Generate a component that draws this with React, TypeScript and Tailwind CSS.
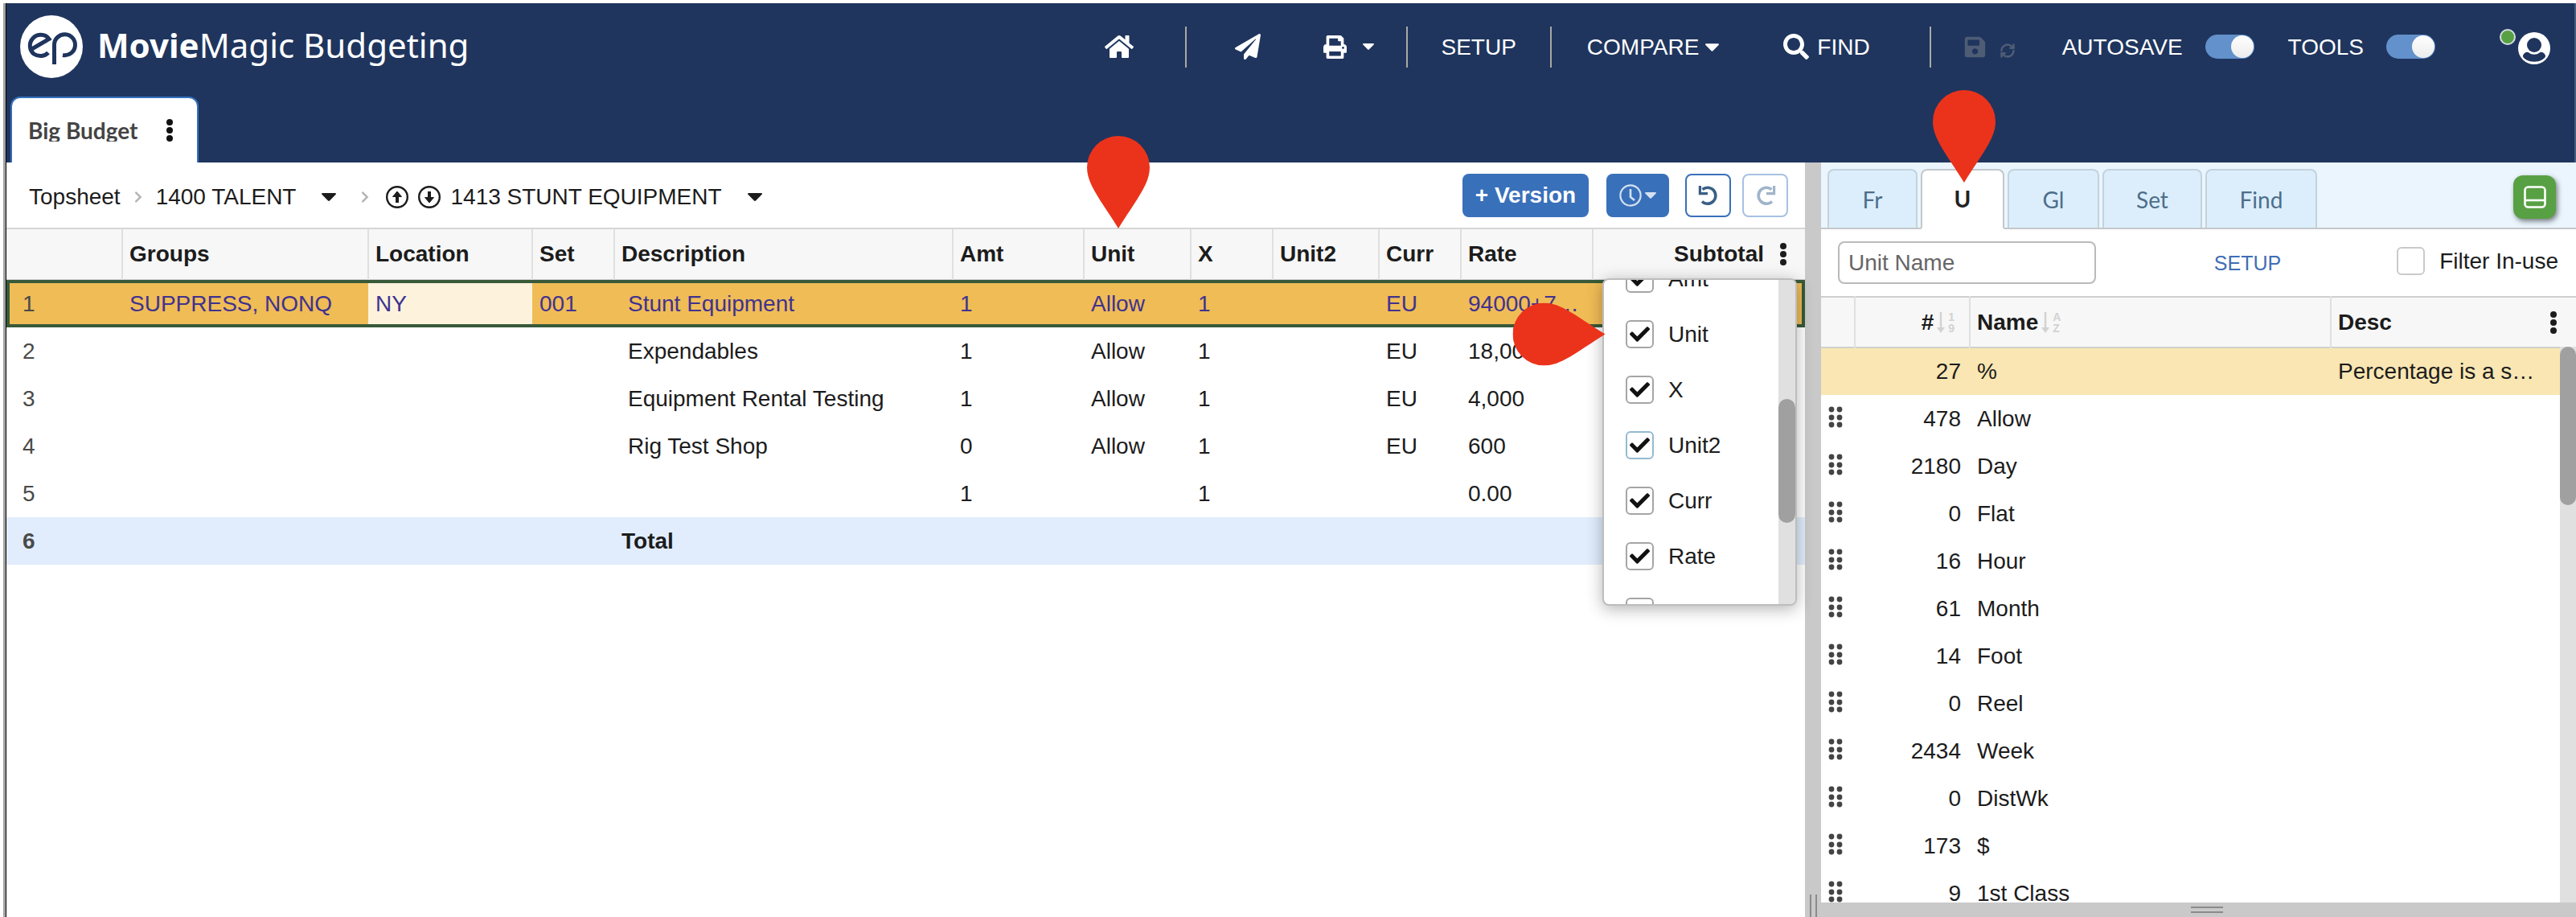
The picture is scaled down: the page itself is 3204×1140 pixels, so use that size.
import { useState } from 'react';
import type { ReactNode } from 'react';
import { FaCheck, FaChevronRight, FaHome, FaPaperPlane, FaPrint, FaSave, FaSearch } from 'react-icons/fa';
import { LuRefreshCw } from 'react-icons/lu';

const budgetRows = [
  { id: 1, groups: 'SUPPRESS, NONQ', location: 'NY', set: '001', description: 'Stunt Equipment', amt: '1', unit: 'Allow', x: '1', curr: 'EU', rate: '94000+70000' },
  { id: 2, groups: '', location: '', set: '', description: 'Expendables', amt: '1', unit: 'Allow', x: '1', curr: 'EU', rate: '18,000' },
  { id: 3, groups: '', location: '', set: '', description: 'Equipment Rental Testing', amt: '1', unit: 'Allow', x: '1', curr: 'EU', rate: '4,000' },
  { id: 4, groups: '', location: '', set: '', description: 'Rig Test Shop', amt: '0', unit: 'Allow', x: '1', curr: 'EU', rate: '600' },
  { id: 5, groups: '', location: '', set: '', description: '', amt: '1', unit: '', x: '1', curr: '', rate: '0.00' },
];

const units = [
  { count: 27, name: '%', desc: 'Percentage is a special unit' },
  { count: 478, name: 'Allow' },
  { count: 2180, name: 'Day' },
  { count: 0, name: 'Flat' },
  { count: 16, name: 'Hour' },
  { count: 61, name: 'Month' },
  { count: 14, name: 'Foot' },
  { count: 0, name: 'Reel' },
  { count: 2434, name: 'Week' },
  { count: 0, name: 'DistWk' },
  { count: 173, name: '$' },
  { count: 9, name: '1st Class' },
];

const toolTabs = [
  { name: 'Fr', width: 'w-28' },
  { name: 'U', width: 'w-[104px]' },
  { name: 'Gl', width: 'w-[114px]' },
  { name: 'Set', width: 'w-[124px]' },
  { name: 'Find', width: 'w-[139px]' },
];

const columnOptions = ['Amt', 'Unit', 'X', 'Unit2', 'Curr', 'Rate'];

function Caret({ className }: { className: string }) {
  return (
    <svg viewBox="0 0 18 10" fill="currentColor" className={className} aria-hidden="true">
      <path d="M1.2 0h15.6c1 0 1.5 1.1.8 1.8L10 9.5c-.6.6-1.4.6-2 0L.4 1.8C-.3 1.1.2 0 1.2 0z" />
    </svg>
  );
}

function Dots() {
  return (
    <svg viewBox="0 0 8 28" fill="currentColor" className="w-2 h-7" aria-hidden="true">
      <circle cx="4" cy="4" r="4" />
      <circle cx="4" cy="14" r="4" />
      <circle cx="4" cy="24" r="4" />
    </svg>
  );
}

function DragHandle() {
  return (
    <svg viewBox="0 0 18 28" fill="#444" className="w-[18px] h-7" aria-hidden="true">
      {[4, 14, 23].map((y) => (
        <g key={y}>
          <circle cx="4" cy={y} r="3.4" />
          <circle cx="14" cy={y} r="3.4" />
        </g>
      ))}
    </svg>
  );
}

function CircleArrow({ down = false }: { down?: boolean }) {
  return (
    <svg viewBox="0 0 28 28" fill="none" stroke="currentColor" className={`w-7 h-7 ${down ? 'rotate-180' : ''}`} aria-hidden="true">
      <circle cx="14" cy="14" r="12.8" strokeWidth="2.4" />
      <path d="M14 21V11" strokeWidth="4" />
      <path d="M14 7l5.5 6.5h-11z" fill="currentColor" strokeWidth="1" />
    </svg>
  );
}

function UndoIcon({ className }: { className: string }) {
  return (
    <svg viewBox="0 0 26 26" fill="none" stroke="currentColor" className={className} aria-hidden="true">
      <path d="M5 20.5A10 10 0 1 0 5.5 5.5" strokeWidth="3.6" />
      <path d="M2.4 1v9.6H12" strokeWidth="3.2" />
    </svg>
  );
}

function SortIcon({ top, bottom }: { top: string; bottom: string }) {
  return (
    <span className="flex items-center text-[#d2d2d2]">
      <svg viewBox="0 0 10 26" fill="none" stroke="currentColor" strokeWidth="2.4" className="w-[10px] h-[26px]" aria-hidden="true">
        <path d="M5 0v22" />
        <path d="M0 19h10l-5 7z" fill="currentColor" stroke="none" />
      </svg>
      <span className="flex flex-col ml-1 text-sm leading-[14px]">
        <span>{top}</span>
        <span>{bottom}</span>
      </span>
    </span>
  );
}

function Pin({ className }: { className: string }) {
  return (
    <svg viewBox="0 0 78 115" fill="#eb331b" className={`absolute z-30 pointer-events-none w-[78px] h-[115px] ${className}`} aria-hidden="true">
      <path d="M39 115C16 78 0 60 0 39a39 39 0 0 1 78 0c0 21-16 39-39 76z" />
    </svg>
  );
}

function Divider({ className }: { className: string }) {
  return <span className={`w-0.5 h-[51px] bg-[#a9a9a4] ${className}`} />;
}

function Toggle({ label, className }: { label: string; className: string }) {
  const [on, setOn] = useState(true);

  return (
    <label className={`flex items-center gap-7 cursor-pointer ${className}`}>
      <span className="pt-0.5">{label}</span>
      <span className="relative flex">
        <input
          type="checkbox"
          checked={on}
          onChange={() => setOn(!on)}
          className="appearance-none w-[61px] h-[30px] rounded-full bg-gray-400 checked:bg-[#6391cb] cursor-pointer"
        />
        <span className={`absolute top-px w-7 h-7 rounded-full bg-linear-to-b from-white to-[#ececec] pointer-events-none ${on ? 'right-px' : 'left-px'}`} />
      </span>
    </label>
  );
}

function Header() {
  return (
    <header className="bg-[#1f355e] text-white border-r-2 border-[#4a5c7e]">
      <div className="flex items-center h-[108px] pl-[17px] pr-[30px]">
        <a href="#" className="flex items-center gap-[18px] font-['Noto_Sans',sans-serif] text-[42px] leading-none">
          <svg viewBox="0 0 78 78" fill="none" className="w-[78px] h-[78px]" aria-hidden="true">
            <circle cx="39" cy="39" r="39" fill="#fff" />
            <g stroke="#1f355e" strokeWidth="5">
              <path d="M14.5 42L36 29.5C31 22.5 21 23 16 28.5C10 35 12 44 17 48C23 52 31 51 35 46.5" />
              <path d="M42.5 61V37A13 13 0 1 1 53 49.5" />
            </g>
          </svg>
          <span className="pb-1">
            <strong className="font-bold">Movie</strong>Magic Budgeting
          </span>
        </a>

        <nav className="flex items-center ml-auto text-[28px] leading-none">
          <button aria-label="Home">
            <FaHome className="w-9 h-9" />
          </button>
          <Divider className="ml-16 mr-[60px]" />
          <button aria-label="Send">
            <FaPaperPlane className="w-8 h-8" />
          </button>
          <button aria-label="Print" className="flex items-center gap-5 ml-[78px]">
            <FaPrint className="w-[29px] h-[29px]" />
            <Caret className="w-[14px] h-2" />
          </button>
          <Divider className="ml-10 mr-[42px]" />
          <button className="pt-0.5">SETUP</button>
          <Divider className="ml-[42px] mr-11" />
          <button className="flex items-center gap-2 pt-0.5">
            COMPARE
            <Caret className="w-[17px] h-[10px]" />
          </button>
          <button className="flex items-center gap-[10px] ml-20">
            <FaSearch className="w-8 h-8" />
            <span className="pt-0.5">FIND</span>
          </button>
          <Divider className="ml-[74px] mr-10" />
          <button aria-label="Save" disabled className="flex items-end gap-4 text-[#4e5c75]">
            <FaSave className="w-[29px] h-[29px]" />
            <LuRefreshCw strokeWidth={3} className="w-5 h-5" />
          </button>
          <Toggle label="AUTOSAVE" className="ml-[58px]" />
          <Toggle label="TOOLS" className="ml-[42px]" />
          <button aria-label="Account" className="flex items-start ml-20 gap-[3px]">
            <span className="w-5 h-5 rounded-full bg-[#58a044] border-2 border-[#d5dde0]" />
            <svg viewBox="0 0 40 40" fill="none" className="w-10 h-10 mt-1">
              <circle cx="20" cy="20" r="20" fill="#fff" />
              <circle cx="20" cy="16" r="9" fill="#1f355e" />
              <path d="M6 29C8 25 11 24 13.5 25.5C17 28.5 23 28.5 26.5 25.5C29 24 32 25 34 29C34.5 31 32 33 29.5 34.5C24 37.5 16 37.5 10.5 34.5C8 33 5.5 31 6 29z" fill="#1f355e" />
            </svg>
          </button>
        </nav>
      </div>

      <div className="flex pt-2 pl-[5px]">
        <div className="flex items-center justify-between w-[234px] h-[82px] px-5 bg-white text-[#444] border-2 border-b-0 border-[#3570bd] rounded-t-xl">
          <span className="font-[Lato,sans-serif] font-bold text-[28px] leading-7 overflow-hidden">Big Budget</span>
          <button aria-label="Budget menu" className="text-[#111] mr-[10px]">
            <Dots />
          </button>
        </div>
      </div>
    </header>
  );
}

function Toolbar() {
  return (
    <div className="flex items-center h-[83px] pl-7 pr-[21px] border-b-2 border-[#d6d6d6]">
      <div className="flex items-center pt-1">
        <a href="#">Topsheet</a>
        <FaChevronRight className="w-3 h-4 mx-4 text-[#b5b5b5]" />
        <button className="flex items-center gap-8">
          1400 TALENT
          <Caret className="w-[18px] h-[10px]" />
        </button>
        <FaChevronRight className="w-3 h-4 ml-[30px] mr-5 text-[#b5b5b5]" />
        <button aria-label="Previous account">
          <CircleArrow />
        </button>
        <button aria-label="Next account" className="mx-3">
          <CircleArrow down />
        </button>
        <button className="flex items-center gap-8">
          1413 STUNT EQUIPMENT
          <Caret className="w-[18px] h-[10px]" />
        </button>
      </div>

      <button className="w-[157px] h-[54px] ml-auto rounded-lg bg-[#3970ba] text-white font-bold">+ Version</button>
      <button aria-label="History" className="flex items-center justify-center gap-1 w-[78px] h-[54px] ml-[22px] rounded-lg bg-[#3970ba] text-[#d5e1f2]">
        <svg viewBox="0 0 28 28" fill="none" stroke="currentColor" strokeWidth="2.2" className="w-7 h-7" aria-hidden="true">
          <circle cx="14" cy="14" r="12.6" />
          <path d="M14 6v10l5 4" strokeWidth="2.6" />
        </svg>
        <Caret className="w-[14px] h-2" />
      </button>
      <button aria-label="Undo" className="flex items-center justify-center w-[57px] h-[54px] ml-5 rounded-lg border-2 border-[#3970ba] text-[#3b5f86]">
        <UndoIcon className="w-[26px] h-[26px]" />
      </button>
      <button aria-label="Redo" disabled className="flex items-center justify-center w-[57px] h-[54px] ml-[14px] rounded-lg border-2 border-[#a7c1e2] text-[#a0b4c9]">
        <UndoIcon className="w-[26px] h-[26px] -scale-x-100" />
      </button>
    </div>
  );
}

function HeadCell({ children }: { children?: ReactNode }) {
  return <th className="px-2 text-left font-bold border-r-2 border-[#e0e0e0]">{children}</th>;
}

function ColumnMenu() {
  const [checked, setChecked] = useState<string[]>(columnOptions);

  const toggle = (name: string) => {
    setChecked(checked.includes(name) ? checked.filter((c) => c !== name) : [...checked, name]);
  };

  return (
    <div className="absolute z-20 top-[61px] right-[10px] flex w-[242px] h-[407px] bg-white border-2 border-[#bdbdbd] rounded-lg shadow-[0_4px_20px_rgba(0,0,0,0.3)] overflow-hidden">
      <div className="flex-1 -mt-9 pl-[27px]">
        {columnOptions.map((name) => (
          <label key={name} className="flex items-center gap-[18px] h-[69px] cursor-pointer">
            <span className="relative flex">
              <input
                type="checkbox"
                checked={checked.includes(name)}
                onChange={() => toggle(name)}
                className={`appearance-none w-[35px] h-[35px] border-2 rounded-md bg-white ${name === 'Unit2' ? 'border-[#93b9d2]' : 'border-[#a5a5a5]'}`}
              />
              {checked.includes(name) && <FaCheck className="absolute inset-0 m-auto w-[25px] h-[25px] text-[#111] pointer-events-none" />}
            </span>
            {name}
          </label>
        ))}
        <div className="flex items-center h-[69px]">
          <input type="checkbox" aria-label="Subtotal" className="appearance-none w-[35px] h-[35px] border-2 border-[#a5a5a5] rounded-md" />
        </div>
      </div>
      <div className="w-[21px] pt-[148px] bg-[#e0e0e0]">
        <div className="h-[154px] rounded-full bg-[#a0a0a0]" />
      </div>
    </div>
  );
}

function BudgetGrid() {
  return (
    <div className="relative">
      <table className="w-full table-fixed border-collapse">
        <colgroup>
          <col className="w-36" />
          <col className="w-[306px]" />
          <col className="w-[204px]" />
          <col className="w-[102px]" />
          <col />
          <col className="w-[163px]" />
          <col className="w-[133px]" />
          <col className="w-[102px]" />
          <col className="w-[132px]" />
          <col className="w-[102px]" />
          <col className="w-[164px]" />
          <col className="w-[264px]" />
        </colgroup>
        <thead>
          <tr className="h-[63px] bg-[#f7f7f7] border-b-2 border-[#cfcfcf]">
            <HeadCell />
            <HeadCell>Groups</HeadCell>
            <HeadCell>Location</HeadCell>
            <HeadCell>Set</HeadCell>
            <HeadCell>Description</HeadCell>
            <HeadCell>Amt</HeadCell>
            <HeadCell>Unit</HeadCell>
            <HeadCell>X</HeadCell>
            <HeadCell>Unit2</HeadCell>
            <HeadCell>Curr</HeadCell>
            <HeadCell>Rate</HeadCell>
            <th className="pr-[23px] font-bold">
              <span className="flex items-center justify-end gap-5">
                Subtotal
                <button aria-label="Choose columns">
                  <Dots />
                </button>
              </span>
            </th>
          </tr>
        </thead>
        <tbody>
          {budgetRows.map((row) => {
            const selected = row.id === 1;
            return (
              <tr
                key={row.id}
                className={`h-[59px] ${selected ? 'bg-[#f0bc56] text-[#40328f] outline-4 -outline-offset-4 outline-[#385a39]' : ''}`}
              >
                <td className="pl-5 text-[#4a4a4a]">{row.id}</td>
                <td className="pl-[9px] whitespace-nowrap">{row.groups}</td>
                <td className={`pl-[9px] ${selected ? 'bg-[#fdf3dd]' : ''}`}>{row.location}</td>
                <td className="pl-[9px]">{row.set}</td>
                <td className="pl-[17px]">{row.description}</td>
                <td className="pl-[9px]">{row.amt}</td>
                <td className="pl-[9px]">{row.unit}</td>
                <td className="pl-[9px]">{row.x}</td>
                <td />
                <td className="pl-[9px]">{row.curr}</td>
                <td className="px-[9px] truncate">{row.rate}</td>
                <td />
              </tr>
            );
          })}
          <tr className="h-[59px] bg-[#e1edfd] font-bold">
            <td className="pl-5 text-[#4a4a4a]">6</td>
            <td colSpan={3} />
            <td className="pl-[9px]">Total</td>
            <td colSpan={7} />
          </tr>
        </tbody>
      </table>
      <ColumnMenu />
      <Pin className="-rotate-90 right-[267px] top-[73px]" />
    </div>
  );
}

function ToolsPanel() {
  const [active, setActive] = useState('U');

  return (
    <aside className="flex flex-col w-[939px] shrink-0">
      <div className="flex items-end h-[83px] pl-2 pr-[25px] gap-1 bg-[#eaf5fd] border-b-2 border-[#c4c8ca]">
        {toolTabs.map((tab) => (
          <button
            key={tab.name}
            onClick={() => setActive(tab.name)}
            className={`relative font-[Lato,sans-serif] border-2 rounded-t-lg ${tab.width} ${
              active === tab.name
                ? 'h-[75px] -mb-0.5 pb-px bg-white border-[#c4c8ca] border-b-white text-[#222] font-bold'
                : 'h-[73px] bg-[#dceefc] border-[#c3d3de] border-b-0 text-[#4d6e8a]'
            }`}
          >
            {tab.name}
          </button>
        ))}
        <button aria-label="Split panel" className="flex items-center justify-center w-[53px] h-[54px] mb-[11px] ml-auto rounded-xl bg-[#58a044] shadow-[2px_3px_6px_rgba(0,0,0,0.5)]">
          <svg viewBox="0 0 28 28" fill="none" stroke="#fff" strokeWidth="2.6" className="w-7 h-7" aria-hidden="true">
            <rect x="1.5" y="1.5" width="25" height="25" rx="4" />
            <path d="M2 18h24" />
          </svg>
        </button>
      </div>

      <div className="flex items-center h-[83px] shrink-0 pl-[21px] pr-[22px]">
        <input
          type="text"
          aria-label="Unit Name"
          placeholder="Unit Name"
          className="w-[321px] h-[53px] pl-[11px] border-2 border-[#bababa] rounded-lg placeholder:text-[#666]"
        />
        <a href="#" className="ml-auto text-[25px] text-[#3f6db5]">SETUP</a>
        <label className="flex items-center gap-[18px] pb-1 ml-36">
          <input type="checkbox" className="appearance-none w-[35px] h-[35px] border-2 border-[#cacaca] rounded-md" />
          Filter In-use
        </label>
      </div>

      <div className="relative flex-1 min-h-0 overflow-hidden">
        <table className="w-full table-fixed border-collapse">
          <colgroup>
            <col className="w-[42px]" />
            <col className="w-[143px]" />
            <col />
            <col className="w-[305px]" />
          </colgroup>
          <thead>
            <tr className="h-[63px] bg-[#f7f7f7] border-y-2 border-[#cfcfcf]">
              <HeadCell />
              <th className="pr-[18px] font-bold border-r-2 border-[#e0e0e0]">
                <span className="flex items-center justify-end gap-1">
                  #<SortIcon top="1" bottom="9" />
                </span>
              </th>
              <HeadCell>
                <span className="flex items-center gap-1">
                  Name
                  <SortIcon top="A" bottom="Z" />
                </span>
              </HeadCell>
              <th className="pl-2 pr-6 font-bold">
                <span className="flex items-center justify-between">
                  Desc
                  <button aria-label="Choose columns">
                    <Dots />
                  </button>
                </span>
              </th>
            </tr>
          </thead>
          <tbody>
            {units.map((unit, index) => (
              <tr key={unit.name} className={`h-[59px] ${index === 0 ? 'bg-[#f9e6b2]' : ''}`}>
                <td className="pl-[9px] pb-1">{index > 0 && <DragHandle />}</td>
                <td className="pr-[11px] text-right">{unit.count}</td>
                <td className="pl-[9px]">{unit.name}</td>
                <td className="pl-[9px] pr-11 truncate">{unit.desc}</td>
              </tr>
            ))}
          </tbody>
        </table>
        <div className="absolute top-[63px] right-0 bottom-0 w-5 bg-[#e0e0e0]">
          <div className="h-[197px] rounded-full bg-[#a0a0a0]" />
        </div>
      </div>

      <div className="flex flex-col items-center justify-center gap-1 h-[18px] shrink-0 pl-5 bg-[#c9c9c9]">
        <span className="w-10 h-0.5 bg-[#8a8a8a]" />
        <span className="w-10 h-0.5 bg-[#8a8a8a]" />
      </div>
    </aside>
  );
}

export default function App() {
  return (
    <div className="relative flex h-screen pl-1 pt-1 overflow-hidden bg-white font-['Liberation_Sans',Arial,sans-serif] text-[28px] leading-8 text-[#1c1c1c]">
      <div className="w-1 shrink-0 bg-[#a3a3a3] border-r border-black" />
      <div className="flex flex-col flex-1 min-w-0">
        <Header />
        <div className="flex flex-1 min-h-0">
          <main className="flex-1 min-w-0">
            <Toolbar />
            <BudgetGrid />
          </main>
          <div className="flex items-end justify-center gap-[5px] w-5 shrink-0 bg-[#c9c9c9]">
            <span className="w-0.5 h-7 bg-[#8a8a8a]" />
            <span className="w-0.5 h-7 bg-[#8a8a8a]" />
          </div>
          <ToolsPanel />
        </div>
      </div>

      <Pin className="left-[1352px] top-[169px]" />
      <Pin className="left-[2404px] top-28" />
    </div>
  );
}
